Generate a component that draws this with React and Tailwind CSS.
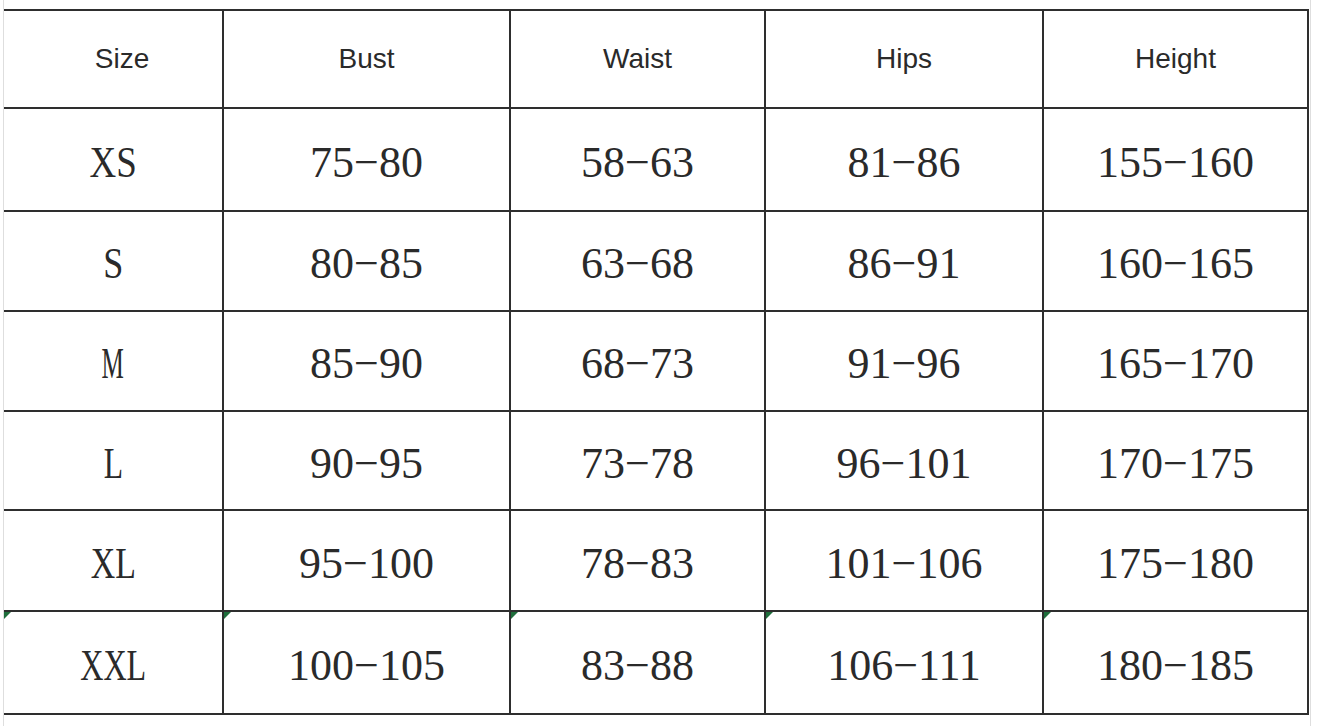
import React from "react";

const header = ["Size", "Bust", "Waist", "Hips", "Height"];

const rows = [
  { size: "XS", sc: "scale-x-[0.84]", v: ["75−80", "58−63", "81−86", "155−160"] },
  { size: "S", sc: "scale-x-[0.82]", v: ["80−85", "63−68", "86−91", "160−165"] },
  { size: "M", sc: "scale-x-[0.57]", v: ["85−90", "68−73", "91−96", "165−170"] },
  { size: "L", sc: "scale-x-[0.72]", v: ["90−95", "73−78", "96−101", "170−175"] },
  { size: "XL", sc: "scale-x-[0.77]", v: ["95−100", "78−83", "101−106", "175−180"] },
  { size: "XXL", sc: "scale-x-[0.73]", v: ["100−105", "83−88", "106−111", "180−185"] },
];

function Flag() {
  return (
    <span className="absolute left-0 top-0 h-0 w-0 border-t-[7px] border-r-[7px] border-t-[#1f6e3c] border-r-transparent" />
  );
}

export default function App() {
  return (
    <div className="h-[726px] w-[1319px] overflow-hidden bg-white">
      <div className="ml-[3px] h-full w-[1308px] border-x border-[#dedede] pt-[9px]">
        <div className="grid w-[1305px] grid-cols-[218px_285px_253px_276px_263px] grid-rows-[96px_101px_98px_98px_97px_99px_101px] gap-[2px] bg-[#2e2e2e] pt-[2px] pb-[2px] pr-[2px]">
          {header.map((h, i) => (
            <div
              key={h}
              className={
                "flex items-center justify-center bg-white text-[28px] text-[#2a2a2a] font-['Liberation_Sans',Arial,sans-serif] " +
                (i === 0 ? "pl-[18px]" : "")
              }
            >
              {h}
            </div>
          ))}
          {rows.map((r, ri) => (
            <React.Fragment key={r.size}>
              <div className="relative flex items-center justify-center bg-white pt-[6px] text-[44px] leading-none text-[#2a2a2a] font-['Liberation_Serif','Times_New_Roman',serif]">
                {ri === rows.length - 1 && <Flag />}
                <span className={"inline-block " + r.sc}>{r.size}</span>
              </div>
              {r.v.map((val, i) => (
                <div
                  key={i}
                  className="relative flex items-center justify-center bg-white pt-[6px] text-[44px] leading-none text-[#2a2a2a] font-['Liberation_Serif','Times_New_Roman',serif]"
                >
                  {ri === rows.length - 1 && <Flag />}
                  {val}
                </div>
              ))}
            </React.Fragment>
          ))}
        </div>
      </div>
    </div>
  );
}
